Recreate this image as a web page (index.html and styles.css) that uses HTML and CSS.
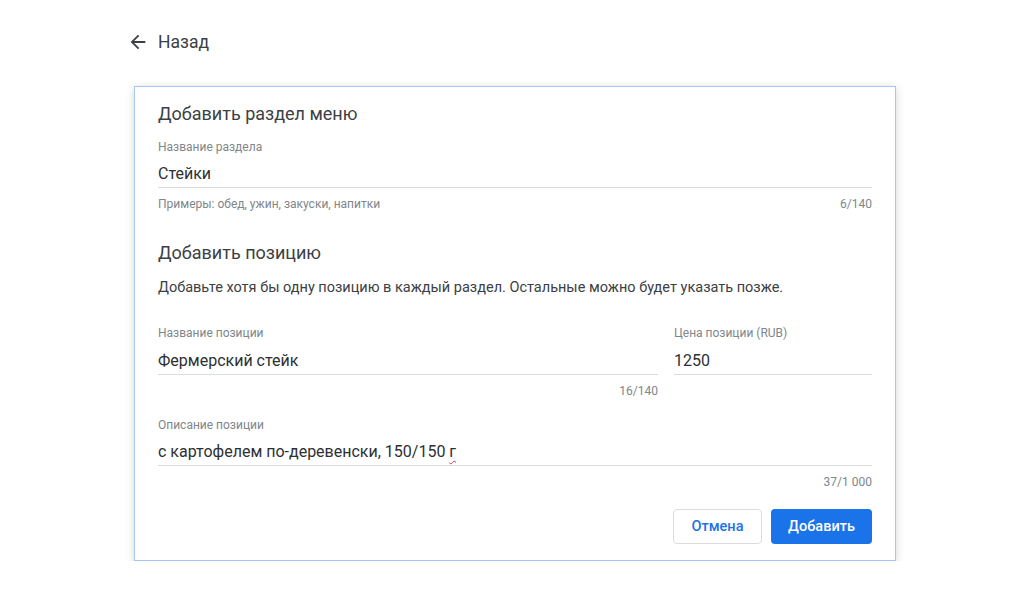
FILE: index.html
```html
<!DOCTYPE html>
<html lang="ru">
<head>
  <meta charset="UTF-8" />
  <title>Добавить раздел меню</title>
  <link rel="stylesheet" href="styles.css">
</head>
<body>
  <div class="page">
    <a href="#" class="back-link">
      <svg class="back-icon" width="22" height="22" viewBox="0 0 24 24">
        <path d="M20 11H7.83l5.59-5.59L12 4l-8 8 8 8 1.41-1.41L7.83 13H20v-2z" fill="#3c4043"/>
      </svg>
      <span>Назад</span>
    </a>

    <div class="card">
      <h2 class="card-title">Добавить раздел меню</h2>

      <div class="field">
        <div class="field-label">Название раздела</div>
        <div class="field-value">Стейки</div>
        <div class="field-hint">
          <span>Примеры: обед, ужин, закуски, напитки</span>
          <span>6/140</span>
        </div>
      </div>

      <h2 class="card-title section-title">Добавить позицию</h2>
      <p class="section-text">Добавьте хотя бы одну позицию в каждый раздел. Остальные можно будет указать позже.</p>

      <div class="field-row">
        <div class="field field-name">
          <div class="field-label">Название позиции</div>
          <div class="field-value">Фермерский стейк</div>
          <div class="field-hint"><span></span><span>16/140</span></div>
        </div>
        <div class="field field-price">
          <div class="field-label">Цена позиции (RUB)</div>
          <div class="field-value">1250</div>
        </div>
      </div>

      <div class="field field-desc">
        <div class="field-label">Описание позиции</div>
        <div class="field-value">с картофелем по-деревенски, 150/150 <span class="typo">г</span></div>
        <div class="field-hint"><span></span><span>37/1 000</span></div>
      </div>

      <div class="actions">
        <button class="btn btn-cancel">Отмена</button>
        <button class="btn btn-primary">Добавить</button>
      </div>
    </div>
  </div>
</body>
</html>
```

FILE: styles.css
```css
body {
  margin: 0;
  padding: 0;
  background: #fff;
  font-family: Roboto, 'Noto Sans', Arial, sans-serif;
  color: #3c4043;
}

.page {
  width: 762px;
  margin-left: 134px;
  padding-top: 30px;
}

.back-link {
  display: flex;
  align-items: center;
  gap: 9px;
  margin-left: -7px;
  height: 24px;
  text-decoration: none;
  color: #3c4043;
  font-size: 17.5px;
}

.card {
  margin-top: 32px;
  border: 1px solid #a9c5f5;
  box-shadow: 0 2px 8px rgba(60, 64, 67, 0.22);
  padding: 15px 23px 16px 23px;
  background: #fff;
}

.card-title {
  margin: 0;
  font-size: 18px;
  line-height: 24px;
  font-weight: 400;
  color: #3c4043;
}

.field {
  margin-top: 13px;
}

.field-label {
  font-size: 12px;
  line-height: 16px;
  color: #80868b;
}

.field-value {
  margin-top: 9px;
  font-size: 16px;
  line-height: 20px;
  color: #2d3033;
  padding-bottom: 3px;
  border-bottom: 1px solid #dadce0;
}

.field-hint {
  display: flex;
  justify-content: space-between;
  margin-top: 8px;
  font-size: 12px;
  line-height: 16px;
  color: #80868b;
}

.section-title {
  margin-top: 29px;
}

.section-text {
  margin: 13px 0 0 0;
  font-size: 14.5px;
  line-height: 20px;
  color: #3c4043;
}

.field-row {
  display: flex;
  gap: 16px;
  margin-top: 27px;
}

.field-row .field {
  margin-top: 0;
}

.field-name {
  width: 500px;
}

.field-price {
  flex: 1;
}

.field-row .field-value {
  margin-top: 10px;
}

.field-desc {
  margin-top: 18px;
}

.typo {
  text-decoration: underline wavy #e53935;
  text-decoration-thickness: 1px;
  text-underline-offset: 3px;
}

.actions {
  display: flex;
  justify-content: flex-end;
  gap: 9px;
  margin-top: 19px;
}

.btn {
  height: 35px;
  border-radius: 4px;
  font-family: Roboto, 'Noto Sans', Arial, sans-serif;
  font-size: 14.5px;
  font-weight: 500;
  cursor: pointer;
}

.btn-cancel {
  width: 89px;
  background: #fff;
  border: 1px solid #dadce0;
  color: #1a73e8;
}

.btn-primary {
  width: 101px;
  background: #1a73e8;
  border: none;
  color: #fff;
}
```
